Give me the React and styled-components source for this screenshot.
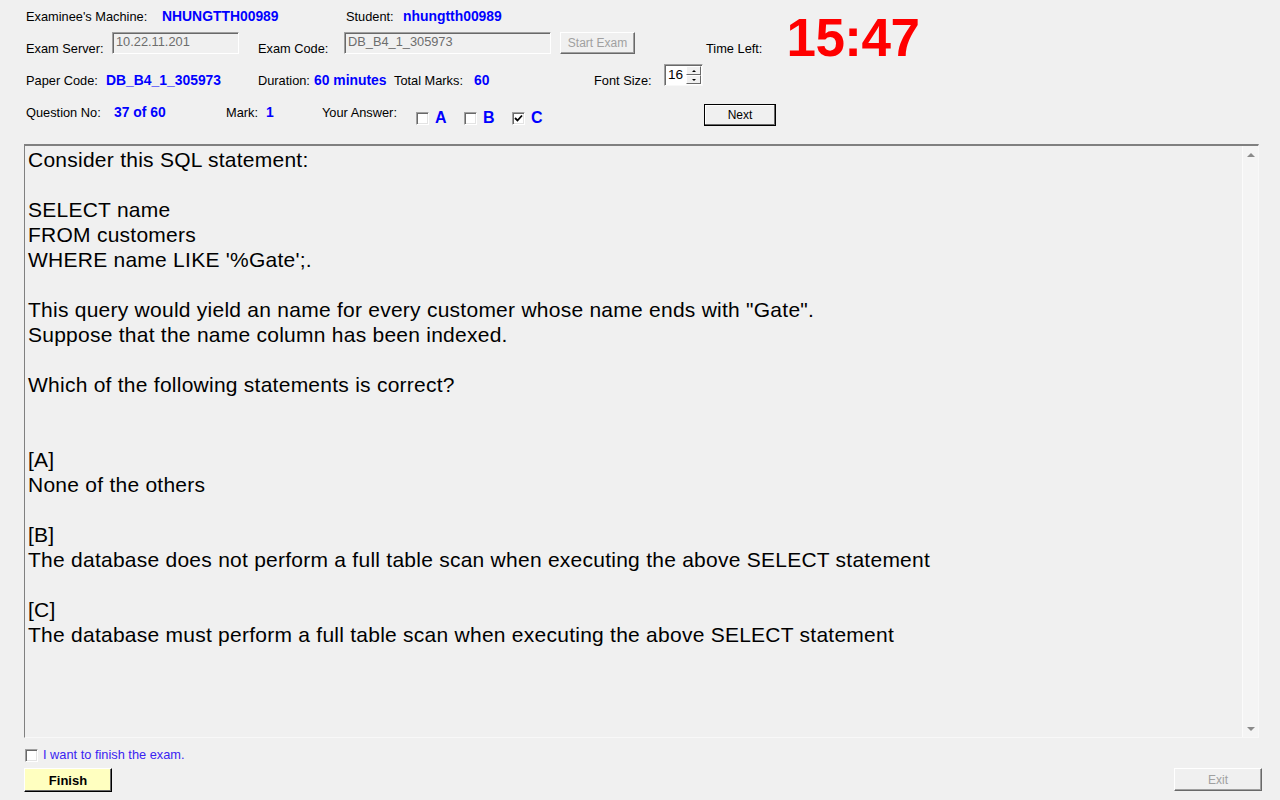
import React, { useState } from 'react';
import styled, { createGlobalStyle } from 'styled-components';

const GlobalStyle = createGlobalStyle`
  html, body {
    margin: 0;
    padding: 0;
    background: #f0f0f0;
  }
  body {
    font-family: "Liberation Sans", Arial, sans-serif;
    color: #000;
  }
`;

const question = [
  'Consider this SQL statement:',
  '',
  'SELECT name',
  'FROM customers',
  "WHERE name LIKE '%Gate';.",
  '',
  'This query would yield an name for every customer whose name ends with "Gate".',
  'Suppose that the name column has been indexed.',
  '',
  'Which of the following statements is correct?',
  '',
  '',
  '[A]',
  'None of the others',
  '',
  '[B]',
  'The database does not perform a full table scan when executing the above SELECT statement',
  '',
  '[C]',
  'The database must perform a full table scan when executing the above SELECT statement'
];

export default function App() {
  const [answers, setAnswers] = useState({ A: false, B: false, C: true });
  const [wantFinish, setWantFinish] = useState(false);

  const toggle = key => setAnswers(a => ({ ...a, [key]: !a[key] }));

  return (
    <Window>
      <GlobalStyle />
      <Header>
        <TopLeft>
          <Row1>
            <Label w={136}>Examinee's Machine:</Label>
            <Value w={184}>NHUNGTTH00989</Value>
            <Label w={57}>Student:</Label>
            <Value>nhungtth00989</Value>
          </Row1>
          <Row2>
            <Label w={86} low>Exam Server:</Label>
            <TextBox w={127}>10.22.11.201</TextBox>
            <Label w={86} gap={19} low>Exam Code:</Label>
            <TextBox w={207}>DB_B4_1_305973</TextBox>
            <Button w={75} gap={9} disabled>Start Exam</Button>
            <Label gap={71} low>Time Left:</Label>
          </Row2>
        </TopLeft>
        <Timer>15:47</Timer>
      </Header>

      <Row3>
        <Label w={80} low>Paper Code:</Label>
        <Value w={152} low>DB_B4_1_305973</Value>
        <Label w={56} low>Duration:</Label>
        <Value w={80} low>60 minutes</Value>
        <Label w={80} low>Total Marks:</Label>
        <Value w={120} low>60</Value>
        <Label w={70} low>Font Size:</Label>
        <Spinner>
          <SpinValue>16</SpinValue>
          <SpinButtons>
            <SpinBtn><Arrow up /></SpinBtn>
            <SpinBtn><Arrow /></SpinBtn>
          </SpinButtons>
        </Spinner>
      </Row3>

      <Row4>
        <TopLabel w={88}>Question No:</TopLabel>
        <TopValue w={112}>37 of 60</TopValue>
        <TopLabel w={40}>Mark:</TopLabel>
        <TopValue w={56}>1</TopValue>
        <TopLabel w={94}>Your Answer:</TopLabel>
        <Answers>
          {['A', 'B', 'C'].map(key => (
            <AnswerItem key={key} onClick={() => toggle(key)}>
              <CheckBox checked={answers[key]} />
              <AnswerLetter>{key}</AnswerLetter>
            </AnswerItem>
          ))}
        </Answers>
        <Button w={72} gap={0} primary>Next</Button>
      </Row4>

      <ContentBox>
        <QuestionText>
          {question.map((line, i) => (
            <Line key={i}>{line || '\u00a0'}</Line>
          ))}
        </QuestionText>
        <ScrollBar>
          <ScrollArrow up />
          <ScrollArrow />
        </ScrollBar>
      </ContentBox>

      <FinishRow onClick={() => setWantFinish(v => !v)}>
        <CheckBox checked={wantFinish} />
        <FinishLabel>I want to finish the exam.</FinishLabel>
      </FinishRow>

      <BottomBar>
        <FinishButton>Finish</FinishButton>
        <Button w={88} h={23} disabled>Exit</Button>
      </BottomBar>
    </Window>
  );
}

function CheckBox({ checked }) {
  return (
    <Box>
      {checked && (
        <svg width="9" height="9" viewBox="0 0 9 9">
          <path d="M1 4 L3.5 6.5 L8 1.5" stroke="#000" strokeWidth="1.8" fill="none" />
        </svg>
      )}
    </Box>
  );
}

const Window = styled.div`
  width: 1280px;
  height: 800px;
  box-sizing: border-box;
  padding: 0 18px 0 24px;
  overflow: hidden;
  display: flex;
  flex-direction: column;
`;

const Header = styled.div`
  display: flex;
  align-items: flex-start;
  height: 64px;
`;

const TopLeft = styled.div`
  display: flex;
  flex-direction: column;
  padding-left: 2px;
`;

const Row1 = styled.div`
  display: flex;
  align-items: center;
  height: 20px;
  margin-top: 6px;
`;

const Row2 = styled.div`
  display: flex;
  align-items: flex-end;
  height: 22px;
  margin-top: 6px;
`;

const Row3 = styled.div`
  display: flex;
  align-items: flex-end;
  height: 22px;
  padding-left: 2px;
`;

const Row4 = styled.div`
  display: flex;
  align-items: flex-start;
  height: 22px;
  margin-top: 18px;
  padding-left: 2px;
`;

const Label = styled.span`
  flex: none;
  width: ${p => (p.w ? `${p.w}px` : 'auto')};
  margin-left: ${p => p.gap || 0}px;
  margin-bottom: ${p => (p.low ? -2 : 0)}px;
  font-size: 12.8px;
  line-height: 15px;
  white-space: nowrap;
`;

const Value = styled.span`
  flex: none;
  width: ${p => (p.w ? `${p.w}px` : 'auto')};
  margin-bottom: ${p => (p.low ? -2 : 0)}px;
  font-size: 13.9px;
  font-weight: bold;
  line-height: 15px;
  color: #0000ff;
  white-space: nowrap;
`;

const TopLabel = styled(Label)`
  margin-top: 1px;
`;

const TopValue = styled(Value)`
  margin-top: 1px;
`;

const TextBox = styled.div`
  flex: none;
  box-sizing: border-box;
  width: ${p => p.w}px;
  height: 22px;
  border: 1px solid;
  border-color: #a0a0a0 #ffffff #ffffff #a0a0a0;
  box-shadow: inset 1px 1px 0 #696969;
  padding: 1px 3px;
  font-size: 12.8px;
  line-height: 16px;
  color: #6d6d6d;
  background: #f0f0f0;
`;

const Button = styled.button`
  flex: none;
  box-sizing: border-box;
  width: ${p => p.w}px;
  height: ${p => p.h || 22}px;
  margin-left: ${p => p.gap || 0}px;
  padding: 0;
  background: #f0f0f0;
  font-family: "Liberation Sans", Arial, sans-serif;
  font-size: 12px;
  color: ${p => (p.disabled ? '#a0a0a0' : '#000')};
  border: 1px solid;
  border-color: ${p => (p.primary ? '#000' : '#ffffff #696969 #696969 #ffffff')};
  box-shadow: ${p => (p.primary ? 'inset -1px -1px 0 #696969, inset 1px 1px 0 #fff' : 'inset -1px -1px 0 #a0a0a0')};
`;

const Timer = styled.div`
  margin-left: 24px;
  margin-top: 8px;
  font-size: 53px;
  line-height: 60px;
  font-weight: bold;
  color: #ff0000;
  letter-spacing: -0.5px;
`;

const Spinner = styled.div`
  flex: none;
  box-sizing: border-box;
  width: 39px;
  height: 22px;
  display: flex;
  background: #fff;
  border: 1px solid;
  border-color: #a0a0a0 #f8f8f8 #f8f8f8 #a0a0a0;
  box-shadow: inset 1px 1px 0 #696969;
`;

const SpinValue = styled.span`
  flex: 1;
  font-size: 13.6px;
  line-height: 20px;
  padding-left: 3px;
`;

const SpinButtons = styled.div`
  display: flex;
  flex-direction: column;
  width: 15px;
  padding: 1px 1px 1px 0;
`;

const SpinBtn = styled.div`
  flex: 1;
  box-sizing: border-box;
  display: flex;
  align-items: center;
  justify-content: center;
  background: #f0f0f0;
  border: 1px solid;
  border-color: #ffffff #696969 #696969 #ffffff;
`;

const Arrow = styled.span`
  width: 0;
  height: 0;
  border-left: 2px solid transparent;
  border-right: 2px solid transparent;
  ${p => (p.up ? 'border-bottom: 2px solid #000;' : 'border-top: 2px solid #000;')}
`;

const Answers = styled.div`
  display: flex;
  width: 288px;
  margin-top: 5px;
`;

const AnswerItem = styled.div`
  display: flex;
  align-items: center;
  width: 48px;
  cursor: pointer;
`;

const Box = styled.span`
  flex: none;
  box-sizing: border-box;
  width: 13px;
  height: 13px;
  display: flex;
  align-items: center;
  justify-content: center;
  background: #fff;
  border: 1px solid;
  border-color: #a0a0a0 #ffffff #ffffff #a0a0a0;
  box-shadow: inset 1px 1px 0 #696969, inset -1px -1px 0 #e3e3e3;
`;

const AnswerLetter = styled.span`
  margin-left: 6px;
  font-size: 16px;
  font-weight: bold;
  color: #0000ff;
  line-height: 18px;
`;

const ContentBox = styled.div`
  margin-top: 18px;
  box-sizing: border-box;
  width: 1235px;
  height: 594px;
  display: flex;
  border: 1px solid;
  border-color: #808080 #f8f8f8 #f8f8f8 #808080;
  border-top-width: 2px;
  background: #f0f0f0;
`;

const QuestionText = styled.div`
  flex: 1;
  padding: 1px 3px;
  font-size: 21px;
  letter-spacing: 0.25px;
  line-height: 25px;
  color: #000;
  white-space: pre;
  overflow: hidden;
`;

const Line = styled.div`
  height: 25px;
`;

const ScrollBar = styled.div`
  flex: none;
  width: 15px;
  display: flex;
  flex-direction: column;
  justify-content: space-between;
  align-items: center;
  padding: 7px 0 6px;
  background: #f4f4f4;
  border-left: 1px solid #fbfbfb;
`;

const ScrollArrow = styled.span`
  width: 0;
  height: 0;
  border-left: 4px solid transparent;
  border-right: 4px solid transparent;
  ${p => (p.up ? 'border-bottom: 4px solid #8a8a8a;' : 'border-top: 4px solid #8a8a8a;')}
`;

const FinishRow = styled.div`
  display: flex;
  align-items: center;
  gap: 5px;
  margin-top: 10px;
  margin-left: 1px;
  height: 14px;
  cursor: pointer;
`;

const FinishLabel = styled.span`
  font-size: 12.8px;
  color: #3a24f2;
  line-height: 14px;
`;

const BottomBar = styled.div`
  display: flex;
  justify-content: space-between;
  margin-top: 6px;
`;

const FinishButton = styled.button`
  box-sizing: border-box;
  width: 88px;
  height: 24px;
  padding: 0;
  background: #ffffc0;
  font-family: "Liberation Sans", Arial, sans-serif;
  font-size: 13px;
  font-weight: bold;
  color: #000;
  border: 1px solid;
  border-color: #ffffff #000 #000 #ffffff;
  box-shadow: inset -1px -1px 0 #696969;
`;
